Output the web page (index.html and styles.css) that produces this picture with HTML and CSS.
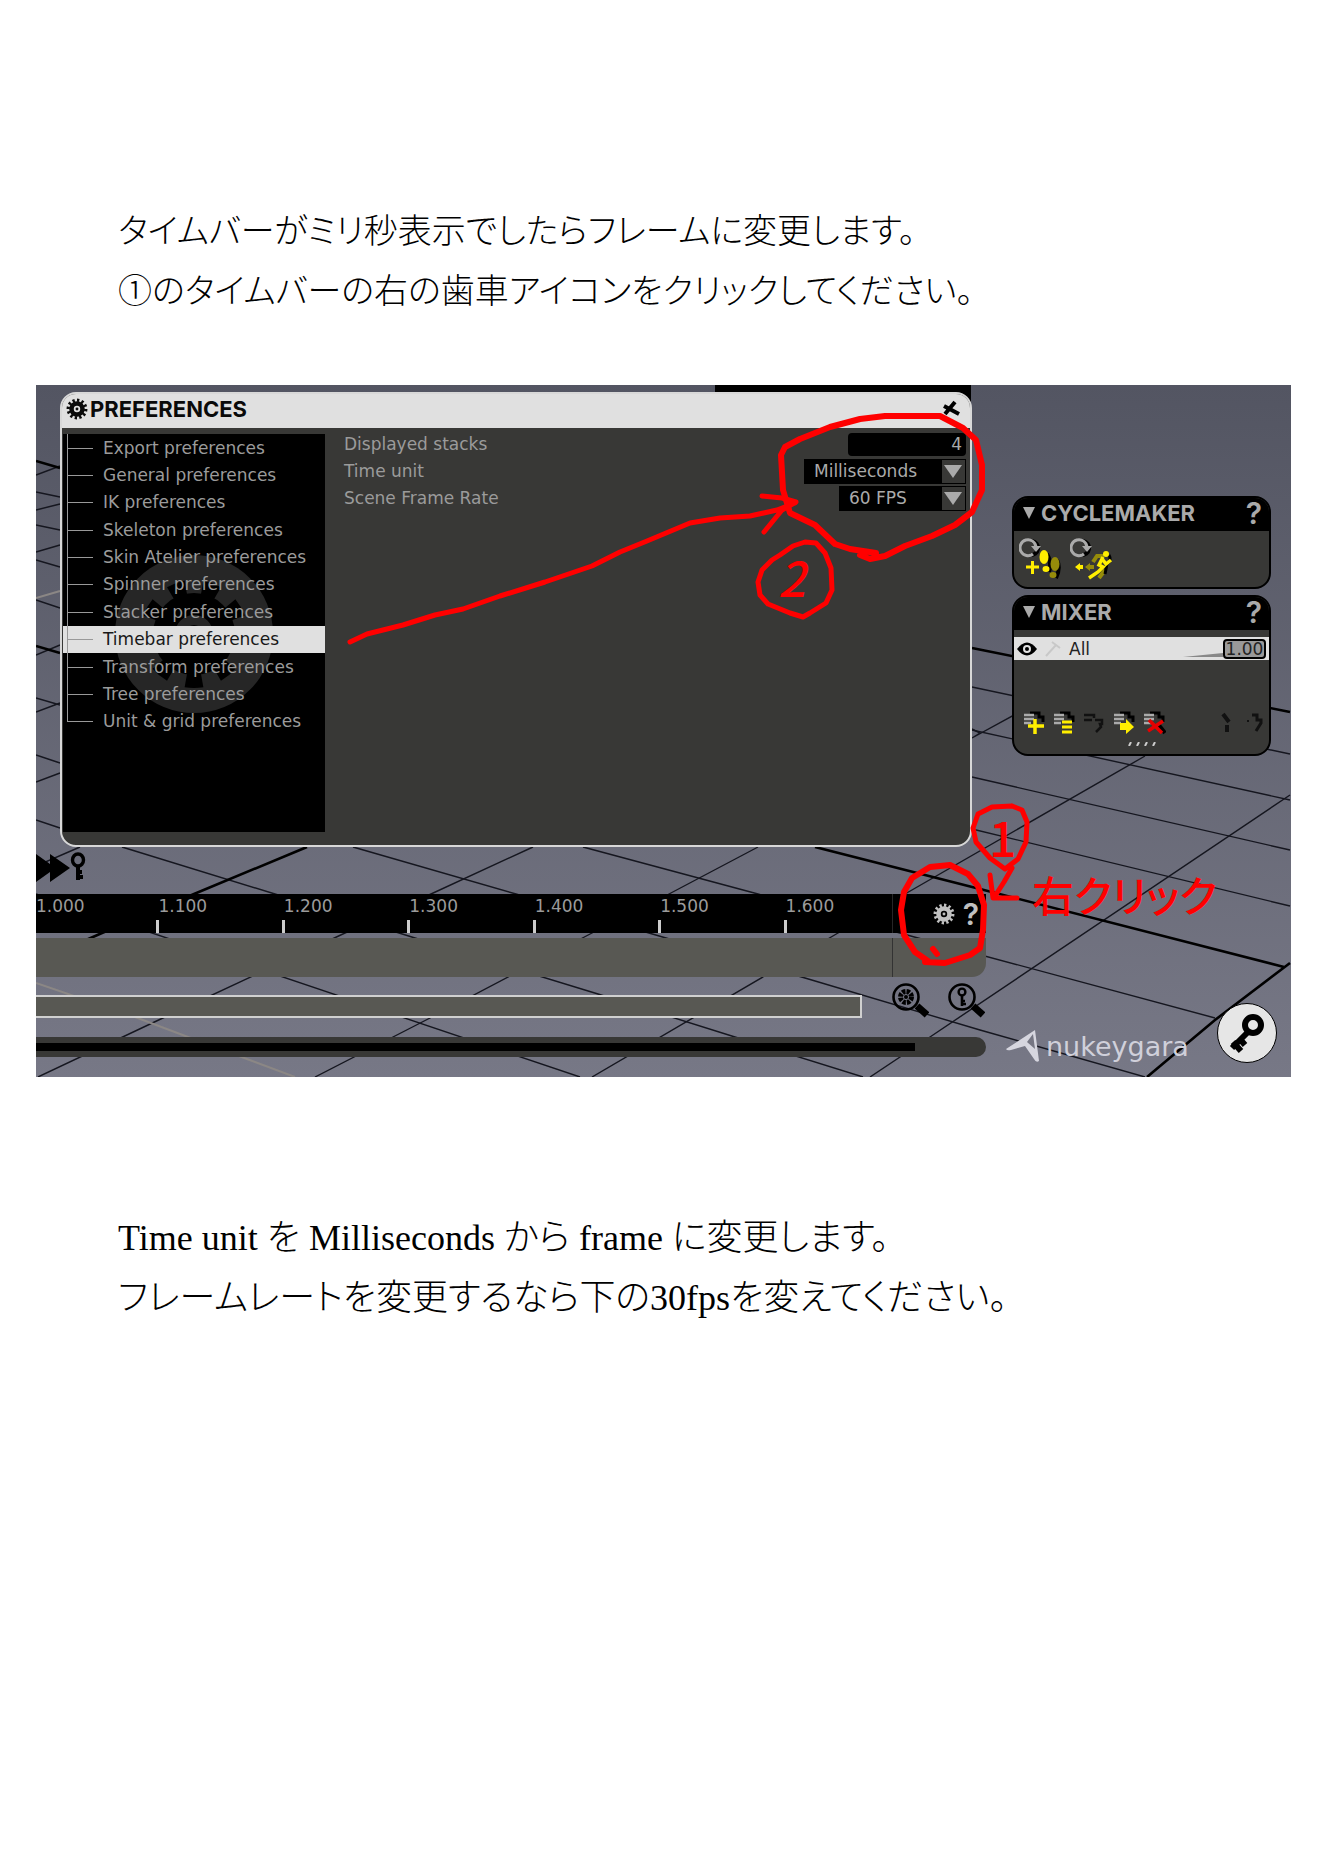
FILE: index.html
```html
<!DOCTYPE html>
<html lang="ja">
<head>
<meta charset="utf-8">
<meta name="viewport" content="width=device-width, initial-scale=1">
<title>タイムバーの設定</title>
<link rel="stylesheet" href="styles.css">
</head>
<body>
<svg class="defs" aria-hidden="true">
  <symbol id="gear" viewBox="0 0 24 24">
    <circle cx="12" cy="12" r="6" fill="none" stroke="currentColor" stroke-width="5"/>
    <circle cx="12" cy="12" r="9.6" fill="none" stroke="currentColor" stroke-width="3.6" pathLength="24" stroke-dasharray="1 1"/>
    <circle cx="12" cy="12" r="1.6" fill="currentColor"/>
  </symbol>
  <symbol id="key" viewBox="0 0 16 30">
    <ellipse cx="8" cy="8" rx="5.5" ry="6" fill="none" stroke="currentColor" stroke-width="3.4"/>
    <path d="M8 14v14M8 25h5M8 20h4" fill="none" stroke="currentColor" stroke-width="4"/>
  </symbol>
  <symbol id="lines" viewBox="0 0 24 24">
    <path d="M8 2h9v4h4v5" fill="none" stroke="#000" stroke-width="3"/>
    <path d="M2 4h10M2 8h10M2 12h7" stroke="#aaa" stroke-width="2.4"/>
  </symbol>
  <symbol id="cycle" viewBox="0 0 24 22">
    <path d="M10 3a7 7 0 1 1-2 14" transform="translate(3 1)" fill="none" stroke="#000" stroke-width="4"/>
    <path d="M14 17a8 8 0 1 1 3-7" fill="none" stroke="#aaa" stroke-width="3"/>
    <path d="M12 9h10l-5 6z" fill="#aaa"/>
  </symbol>
</svg>

<main class="page">
  <p class="prose">タイムバーがミリ秒表示でしたらフレームに変更します。<br>①のタイムバーの右の歯車アイコンをクリックしてください。</p>

  <section class="scene" aria-label="Timebar preferences">
    <svg class="layer" viewBox="36 385 1255 692" preserveAspectRatio="none" aria-hidden="true">
      <g fill="none" stroke="#15161f" stroke-width="1.4">
        <path d="M36 894L580 1077M122 847L275 894 415 938 598 994 735 1037 863 1077M353 847L516 894 666 938 805 978 980 1030 1145 1077M583 847L758 894 918 938 1215 1018M972 829L1290 906M972 777L1290 850M972 730L1290 800M972 687L1290 754"/>
        <path d="M972 738L1060 690M592 1077L838 933 905 894 1145 756M870 1077L930 1037 1290 795M315 1077L430 1018 592 933 669 894 758 847M38 1077L165 1017 345 933 431 894 533 847M36 866L80 847M972 729L980 733 972 738"/>
        <path d="M36 475L60 466M36 492L60 497M36 510L60 504M36 525L60 530M36 552L60 545M36 560L60 567M36 600L60 608M36 655L60 645M36 698L60 705M36 712L60 703M36 755L60 763M36 782L60 773M36 820L60 828"/>
      </g>
      <path d="M36 461L60 468M36 646L60 653M36 962L102 933 194 894 307 847M815 847L980 889 1284 967M972 648L1290 712M1147 1077L1215 1020 1290 963" fill="none" stroke="#000" stroke-width="2.6"/>
      <path d="M36 983L135 1017 188 1037 295 1077M36 598L60 591" fill="none" stroke="#8b8785" stroke-width="2"/>
      <path d="M715 385h256v30h-256z" fill="#000"/>
    </svg>

    <div class="left">
      <section class="dialog">
        <header class="dialog-head">
          <svg class="i22"><use href="#gear"/></svg>
          <h1>PREFERENCES</h1>
          <button class="plain close" aria-label="Close"><svg width="20" height="18" viewBox="0 0 20 18"><path d="M2 6l15 8M13 2L3 14" fill="none" stroke="#000" stroke-width="4"/></svg></button>
        </header>
        <div class="dialog-body">
          <nav class="tree">
            <svg class="emblem" viewBox="0 0 160 160" aria-hidden="true">
              <circle cx="80" cy="80" r="79" fill="#262626"/>
              <circle cx="80" cy="80" r="41" fill="#000"/>
              <circle cx="80" cy="80" r="46" fill="none" stroke="#000" stroke-width="16" pathLength="18" stroke-dasharray="1 1"/>
              <circle cx="80" cy="80" r="14" fill="none" stroke="#262626" stroke-width="10"/>
            </svg>
            <ul>
              <li><a href="#">Export preferences</a></li>
              <li><a href="#">General preferences</a></li>
              <li><a href="#">IK preferences</a></li>
              <li><a href="#">Skeleton preferences</a></li>
              <li><a href="#">Skin Atelier preferences</a></li>
              <li><a href="#">Spinner preferences</a></li>
              <li><a href="#">Stacker preferences</a></li>
              <li class="on"><a href="#" aria-current="page">Timebar preferences</a></li>
              <li><a href="#">Transform preferences</a></li>
              <li><a href="#">Tree preferences</a></li>
              <li><a href="#">Unit &amp; grid preferences</a></li>
            </ul>
          </nav>
          <form class="fields">
            <div class="field"><label for="stacks">Displayed stacks</label><input id="stacks" class="num" type="text" value="4"></div>
            <div class="field"><label for="unit">Time unit</label><span class="combo wide"><select id="unit"><option>Milliseconds</option><option>Frames</option></select></span></div>
            <div class="field"><label for="rate">Scene Frame Rate</label><span class="combo"><select id="rate"><option>60 FPS</option><option>30 FPS</option></select></span></div>
          </form>
        </div>
      </section>

      <div class="transport">
        <svg width="34" height="32" viewBox="0 0 34 32"><path d="M0 2l14 10V2l20 14-20 14V20L0 30z"/></svg>
        <svg width="16" height="30"><use href="#key"/></svg>
      </div>

      <div class="ruler">
        <div class="ruler-scale">
          <ol>
            <li>1.000</li><li>1.100</li><li>1.200</li><li>1.300</li><li>1.400</li><li>1.500</li><li>1.600</li>
          </ol>
        </div>
        <div class="ruler-tools">
          <button class="plain" aria-label="Timebar settings"><svg class="i22"><use href="#gear"/></svg></button>
          <button class="plain help">?</button>
        </div>
      </div>
      <div class="track"><span></span></div>
      <div class="range">
        <div class="range-bar"></div>
        <div class="range-tools">
          <button class="plain" aria-label="Zoom to all"><svg width="38" height="36" viewBox="0 0 38 36"><circle cx="15" cy="15" r="12.5" fill="none" stroke="#000" stroke-width="2.6"/><circle cx="15" cy="15" r="5.5" fill="none" stroke="#000" stroke-width="5" stroke-dasharray="3.2 1.1"/><circle cx="15" cy="15" r="2"/><path d="M26 24l10 9" stroke="#000" stroke-width="7"/></svg></button>
          <button class="plain" aria-label="Zoom to keys"><svg width="38" height="36" viewBox="0 0 38 36"><circle cx="15" cy="15" r="12.5" fill="none" stroke="#000" stroke-width="2.6"/><circle cx="15" cy="10" r="3.4" fill="none" stroke="#000" stroke-width="2.4"/><path d="M15 13v11M15 22h4M15 19h3" fill="none" stroke="#000" stroke-width="2.6"/><path d="M26 24l10 9" stroke="#000" stroke-width="7"/></svg></button>
        </div>
      </div>
      <div class="scroll"><div></div></div>
    </div>

    <aside class="right">
      <section class="panel">
        <header><span class="tri"></span><h2>CYCLEMAKER</h2><button class="plain help">?</button></header>
        <div class="cycle-tools">
          <button class="plain" aria-label="Add steps"><svg width="42" height="44" viewBox="0 0 42 44"><use href="#cycle" width="24" height="22"/><path d="M28 17q5 8 2 18M38 23q4 8-1 18" stroke="#000" stroke-width="4" fill="none"/><path d="M7 30h13M13.500 24v13" stroke="#fe0" stroke-width="3"/><ellipse cx="25" cy="20" rx="4.500" ry="7"  fill="#fe0"/><ellipse cx="27" cy="32" rx="3.500" ry="3" fill="#fe0"/><ellipse cx="36" cy="27" rx="4.500" ry="7" fill="#968c0a"/><ellipse cx="34" cy="38" rx="3.500" ry="3" fill="#968c0a"/></svg></button>
          <button class="plain" aria-label="Run cycle"><svg width="46" height="44" viewBox="0 0 46 44"><use href="#cycle" width="24" height="22"/><path d="M5 30l5-4v2h3v4h-3v2z" fill="#fe0"/><path d="M15 30l5-4v8z M20 28h4v4h-4z" fill="#968c0a"/><path d="M34 19h-7l-4 6M35 33l-6 8" fill="none" stroke="#968c0a" stroke-width="4"/><path d="M39 18q3 5-2 9l-2 10" fill="none" stroke="#000" stroke-width="3"/><circle cx="36" cy="17" r="3" fill="#fe0"/><path d="M33 20l-4 8 4 2-5 5-9 6M33 23l3 4 5-4" fill="none" stroke="#fe0" stroke-width="3.500"/></svg></button>
        </div>
      </section>

      <section class="panel mixer">
        <header><span class="tri"></span><h2>MIXER</h2><button class="plain help">?</button></header>
        <div class="mix-row">
          <svg width="20" height="14" viewBox="0 0 20 14"><path d="M0 7q10-13 20 0q-10 13-20 0z"/><circle cx="10" cy="7" r="4" fill="#e2e2e2"/><circle cx="10" cy="7" r="2"/></svg>
          <svg width="18" height="18" viewBox="0 0 18 18"><path d="M2 16L12 5M8 2l8 6" fill="none" stroke="#c8c8c8" stroke-width="2"/></svg>
          <label for="all">All</label>
          <svg class="wedge" width="40" height="5" viewBox="0 0 40 5"><path d="M0 4L40 0v4z" fill="#888"/></svg>
          <input id="all" type="text" value="1.00">
        </div>
        <div class="mix-tools">
          <button class="plain" aria-label="Add"><svg class="i24"><use href="#lines"/><path d="M6 15h16M13 8v15" stroke="#fe0" stroke-width="3.500"/></svg></button>
          <button class="plain" aria-label="Add group"><svg class="i24"><use href="#lines"/><path d="M10 11h10M10 16h10M10 21h10" stroke="#fe0" stroke-width="3"/></svg></button>
          <button class="plain" aria-label="Split"><svg class="i24"><path d="M2 4h10v3M2 9h8M13 9h7v4h-2l1 3-5 5" fill="none" stroke="#111" stroke-width="2.500"/></svg></button>
          <button class="plain" aria-label="Move"><svg class="i24"><use href="#lines"/><path d="M8 12h6V8l8 8-8 7v-4H8z" fill="#fe0"/></svg></button>
          <button class="plain" aria-label="Delete"><svg class="i24"><use href="#lines"/><path d="M16 13l7 9" stroke="#000" stroke-width="4"/><path d="M7 9l13 13M21 10L6 20" stroke="#e60000" stroke-width="3.500"/></svg></button>
          <button class="plain end" aria-label="Merge"><svg class="i24"><path d="M11 3l6 8M15 14v7" fill="none" stroke="#111" stroke-width="4"/></svg></button>
          <button class="plain" aria-label="Swap"><svg class="i24"><path d="M10 4h5v5h4v3l-5 8" fill="none" stroke="#111" stroke-width="3"/><path d="M5 10h2" stroke="#111" stroke-width="2"/></svg></button>
        </div>
        <svg class="grip" width="30" height="4" viewBox="0 0 30 4"><path d="M2 4l2-4M10 4l2-4M18 4l2-4M26 4l2-4" stroke="#ccc" stroke-width="2"/></svg>
      </section>

      <footer class="brand">
        <svg width="34" height="34" viewBox="0 0 34 34"><path d="M0 20L29 1l4 31q-3 2-5-2L19 17 5 21q-4 1-5-1z" fill="#d6d6df"/><path d="M27 5l2 15-8-7z" fill="#757683"/></svg>
        <span class="brand-name">nukeygara</span>
        <button class="key-btn" aria-label="Key"><svg width="42" height="42" viewBox="0 0 42 42"><circle cx="27" cy="13" r="8" fill="none" stroke="#000" stroke-width="6"/><path d="M22 20L6 36M7 30l8 9M13 26l6 7" fill="none" stroke="#000" stroke-width="6"/></svg></button>
      </footer>
    </aside>

    <svg class="layer marks" viewBox="36 385 1255 692" preserveAspectRatio="none">
      <g fill="none" stroke="#f00" stroke-width="5" stroke-linecap="round" stroke-linejoin="round">
        <path d="M350 642L367 634 403 625 435 615 463 609 500 596 545 582 592 566 620 552 647 541 690 523 720 518 750 516 777 510 795 503M762 496L782 498 796 502 782 510 764 532"/>
        <path d="M876 553L850 549 835 544 815 525 790 513 783 490 781 455 785 447 800 439 830 427 860 419 885 416 940 416 963 428 976 440 982 465 982 490 972 512 955 525 932 536 905 546 885 556 870 559 860 555" stroke-width="6"/>
        <path d="M780 555L793 546 805 542 816 543 825 553 831 568 832 590 826 603 810 613 803 617 790 613 768 604 760 595 758 582 762 570 772 560 780 555"/>
        <path d="M1012 806L992 807 978 814 973 828 976 842 990 858 1005 869 1018 859 1026 842 1027 822 1022 810 1012 806M1012 868L1004 882 995 896M990 875L993 898 1017 898"/>
        <path d="M925 962L945 963 970 955 980 948 983 930 984 905 978 886 968 874 950 865 930 867 912 878 904 892 901 910 904 935 915 952 928 961M933 949L937 954" stroke-width="6"/>
      </g>
      <text class="hand digit" x="989" y="857">1</text>
      <text class="hand digit slant" x="778" y="597">2</text>
      <text class="hand word" x="1032" y="912">右クリック</text>
    </svg>
  </section>

  <p class="prose mixed">Time unit を Milliseconds から frame に変更します。<br>フレームレートを変更するなら下の30fpsを変えてください。</p>
</main>
</body>
</html>
```
FILE: styles.css
```css
* { box-sizing: border-box; }

body { margin: 0; background: #fff; color: #000; }

.defs { position: absolute; width: 0; height: 0; }

.page {
  display: flex;
  flex-direction: column;
  padding: 202px 36px 120px;
}

.prose {
  margin: 0;
  padding: 0 82px;
  font: 300 34px/60px "Liberation Serif", "Noto Sans CJK JP", serif;
  font-feature-settings: "palt";
}
.mixed { font-size: 36px; }

.plain {
  display: flex;
  padding: 0;
  border: 0;
  background: none;
  color: inherit;
  font: inherit;
}

.i22 { width: 22px; height: 22px; display: block; }
.i24 { width: 24px; height: 24px; display: block; }

/* 3D viewport */
.scene {
  position: relative;
  display: grid;
  grid-template-columns: minmax(0, 1fr) 305px;
  margin: 63px 1px 131px 0;
  overflow: hidden;
  background: linear-gradient(#535562, #777886);
  font: 17px/24px "DejaVu Sans", sans-serif;
  color: #9b9b9b;
}

.layer { position: absolute; inset: 0; width: 100%; height: 100%; }
.marks { pointer-events: none; }

.left, .right { position: relative; display: flex; flex-direction: column; }
.left { padding: 7px 0 20px; }

/* preferences window */
.dialog {
  margin: 0 14px 0 24px;
  border: 2px solid #d8d8d8;
  border-radius: 16px;
  background: #383836;
  overflow: hidden;
}

.dialog-head {
  display: flex;
  align-items: center;
  height: 34px;
  padding: 0 8px 4px 4px;
  background: #e0e0e0;
  color: #0a0a0a;
}

h1, h2 { margin: 0; font: 700 22px/28px Inter, sans-serif; }
.dialog-head h1 { padding-left: 2px; }
.close { margin-left: auto; }

.dialog-body { display: flex; padding: 3px 4px 13px 1px; }

.tree {
  position: relative;
  width: 262px;
  height: 398px;
  margin-top: 3px;
  background: #000;
}

.emblem { position: absolute; left: 51px; top: 120px; width: 160px; height: 160px; }

.tree ul {
  position: relative;
  display: grid;
  grid-auto-rows: 1fr;
  height: 301px;
  margin: 0;
  padding: 0;
  list-style: none;
}

.tree li {
  position: relative;
  display: flex;
  align-items: center;
  padding-left: 40px;
  white-space: nowrap;
}

.tree li::before {
  content: "";
  position: absolute;
  left: 4px;
  top: 0;
  width: 1px;
  height: 100%;
  background: #999;
}
.tree li:last-child::before { height: 50%; }

.tree li::after {
  content: "";
  position: absolute;
  left: 4px;
  top: 50%;
  width: 26px;
  height: 1px;
  background: #999;
}

.tree a { color: inherit; text-decoration: none; }
.tree .on { background: #e0e0e0; color: #181818; }

.fields { flex: 1; padding-left: 19px; }
.field {
  display: flex;
  justify-content: space-between;
  align-items: center;
  height: 26px;
  margin-bottom: 1px;
}
.field label { line-height: 24px; }

.num, select {
  border: 0;
  background: #000;
  color: #aaa;
  font: inherit;
}
.num { width: 118px; height: 23px; padding: 0 4px; border-radius: 4px; text-align: right; }

.combo { position: relative; width: 127px; }
.combo.wide { width: 162px; }
.combo select { display: block; width: 100%; height: 25px; padding: 0 10px; appearance: none; }
.combo::before {
  content: "";
  position: absolute;
  right: 1px;
  top: 1px;
  width: 23px;
  height: 23px;
  background: #383836;
}
.combo::after {
  content: "";
  position: absolute;
  right: 4px;
  top: 6px;
  border: solid transparent;
  border-width: 13px 9px 0;
  border-top-color: #aaa;
}

/* transport and timebar */
.transport { display: flex; height: 47px; padding-top: 5px; color: #000; }

.ruler { display: flex; height: 39px; background: #000; }
.ruler-scale { flex: 1; overflow: hidden; border-right: 1px solid #262626; }
.ruler ol {
  display: grid;
  grid-template-columns: repeat(7, 1fr);
  width: calc(100% + 22px);
  height: 39px;
  margin: 0 0 0 -5px;
  padding: 0;
  list-style: none;
}
.ruler li {
  padding-left: 2px;
  background: linear-gradient(#ccc, #ccc) 0 100% / 3px 13px no-repeat;
}
.ruler li:first-child { padding-left: 5px; }
.ruler-tools {
  display: flex;
  align-items: center;
  justify-content: flex-end;
  gap: 8px;
  width: 93px;
  padding-right: 7px;
  color: #c0c0c0;
}

.help { font: 600 30px/28px Inter, sans-serif; }

.track {
  display: flex;
  height: 39px;
  margin-top: 5px;
  border-radius: 0 0 14px 0;
  background: #585853;
}
.track span { flex: 1; margin-right: 93px; border-right: 1px solid #333; }

.range { display: flex; height: 60px; padding-top: 5px; }
.range-bar {
  flex: 1;
  height: 23px;
  margin-top: 13px;
  border: solid #d0d0d0;
  border-width: 2px 2px 2px 0;
  background: #585853;
}
.range-tools { display: flex; gap: 18px; width: 124px; padding-left: 29px; }

.scroll {
  height: 20px;
  padding: 6px 71px 6px 0;
  border-radius: 0 10px 10px 0;
  background: #383836;
}
.scroll div { height: 8px; background: #000; }

/* side panels */
.right { padding: 111px 20px 14px 26px; gap: 6px; }

.panel {
  border: 2px solid #000;
  border-radius: 16px;
  background: #383836;
  overflow: hidden;
}
.panel header {
  display: flex;
  align-items: center;
  height: 33px;
  padding: 0 7px 4px 9px;
  background: #000;
  color: #aaa;
}
.panel h2 { padding-left: 6px; }
.panel header .help { margin-left: auto; }
.tri { border: solid transparent; border-width: 12px 6px 0; border-top-color: #aaa; }

.cycle-tools { display: flex; gap: 9px; height: 56px; padding: 6px 5px; }

.mixer { height: 161px; }
.mix-row {
  display: flex;
  align-items: center;
  gap: 7px;
  height: 23px;
  margin-top: 7px;
  padding: 0 3px;
  background: #e0e0e0;
  color: #222;
}
.mix-row .wedge { margin: 14px -7px 0 auto; }
.mix-row input {
  width: 43px;
  height: 20px;
  padding: 0;
  border: 2px solid #000;
  border-radius: 4px;
  background: #999;
  color: #222;
  font: inherit;
  text-align: center;
}
.mix-tools { display: flex; gap: 6px; margin-top: 51px; padding: 0 3px 0 8px; }
.mix-tools .end { margin-left: auto; }
.grip { display: block; margin: 7px auto 0; }

.brand { display: flex; align-items: flex-end; margin: auto -6px 0; }
.brand-name {
  margin: 0 auto 0 6px;
  color: #d0d0da;
  font: 27px/32px "DejaVu Sans", sans-serif;
}
.key-btn {
  display: flex;
  align-items: center;
  justify-content: center;
  width: 60px;
  height: 60px;
  padding: 0;
  border: 1px solid #000;
  border-radius: 50%;
  background: #e6e6e6;
}

.hand { fill: #f00; font-family: "Noto Sans CJK JP", sans-serif; font-weight: 500; }
.digit { font-size: 48px; }
.slant { font-style: italic; }
.word { font-size: 42px; font-feature-settings: "palt"; }
```
